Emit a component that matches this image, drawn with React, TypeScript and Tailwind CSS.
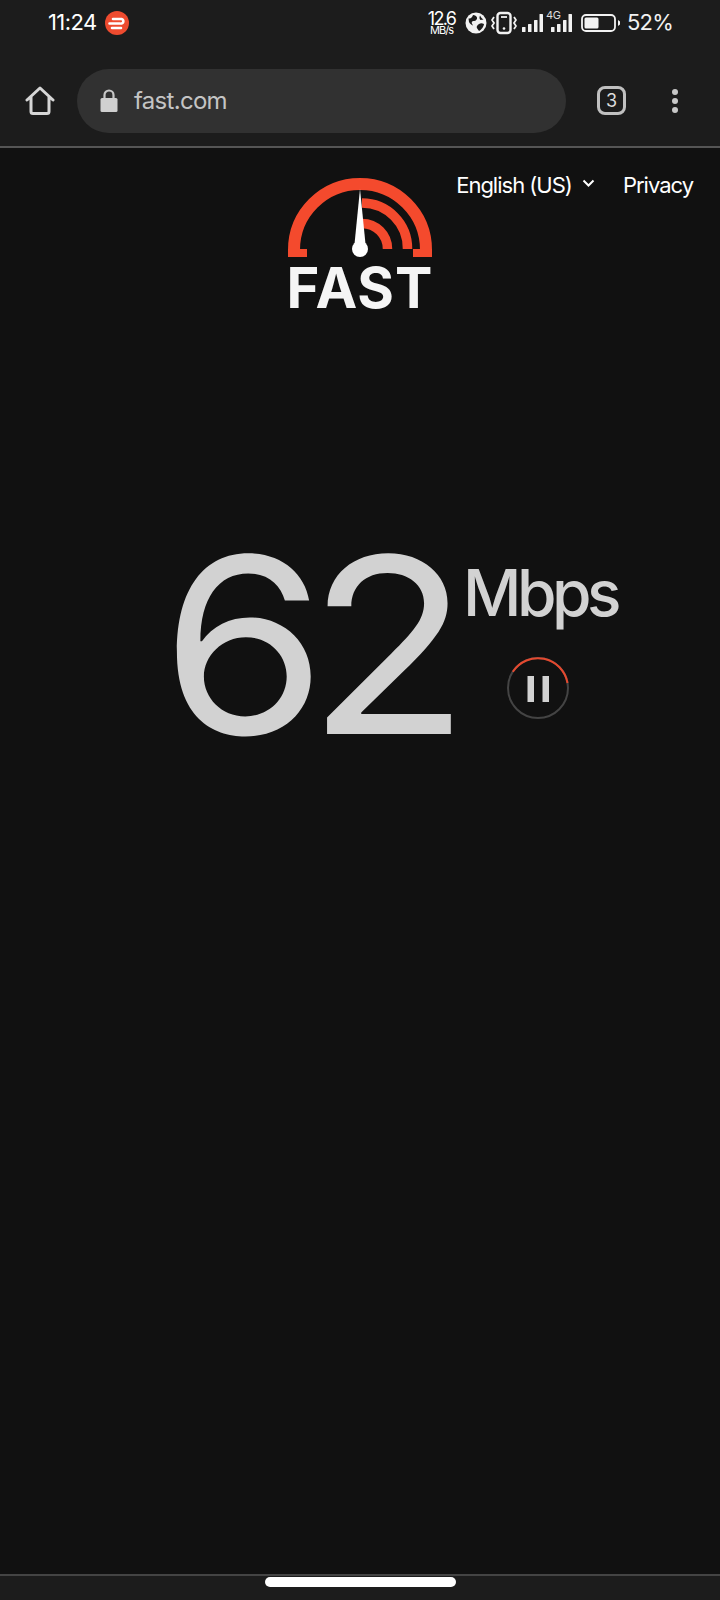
function Signal() {
  return (
    <svg width="21" height="18" viewBox="0 0 21 18" fill="#f2f2f2">
      <rect x="0" y="13" width="3.500" height="5" rx="0.500" />
      <rect x="6" y="10" width="3.500" height="8" rx="0.500" />
      <rect x="12" y="6" width="3.500" height="12" rx="0.500" />
      <rect x="17.500" y="0" width="3.500" height="18" rx="0.500" />
    </svg>
  );
}

export default function App() {
  return (
    <div className="flex h-[1600px] w-[720px] flex-col overflow-hidden bg-[#111111] font-['Inter',sans-serif] text-white">
      <header className="h-[148px] shrink-0 border-b-2 border-[#555555] bg-[#1c1c1c]">
        <div className="flex h-[45px] items-center pl-[48px] pr-[47px]">
          <span className="w-[57px] text-[22px] tracking-[-0.600px]">11:24</span>
          <svg width="24" height="24" viewBox="0 0 24 24">
            <circle cx="12" cy="12" r="12" fill="#ee4b2f" />
            <path d="M8 8h8.500a2.300 2.300 0 0 1 0 4.500M4.500 12.500h10.500M7 17h9" stroke="#fff" strokeWidth="2.600" strokeLinecap="round" fill="none" />
          </svg>
          <div className="ml-auto flex items-center">
            <div className="flex w-[29px] flex-col items-center">
              <span className="text-[18px] leading-[15px] tracking-[-1.700px]">12.6</span>
              <span className="text-[11px] leading-[9px] tracking-[-1px]">MB/s</span>
            </div>
            <svg className="ml-[9px]" width="22" height="22" viewBox="0 0 22 22">
              <circle cx="11" cy="11" r="10.500" fill="#f2f2f2" />
              <path d="M3.500 6.500c2.500.5 3.500-1 4.500-3.500 2 0 3.500 1 4 2.500s-1 3.500-3 3.500-3 1-1.500 3.500-2.500-.5-3.500-2.500zM12 14c2-2.500 4-3.500 7-2 0 2-2.500 6-5 7-1-2-3-3-2-5zM15 3.500c1 2 2 3 3.500 4l-3 .5c-1-1-1.500-2.500-.5-4.500z" fill="#1c1c1c" />
            </svg>
            <svg className="ml-[4px]" width="26" height="24" viewBox="0 0 26 24" fill="none" stroke="#f2f2f2">
              <rect x="6.500" y="2" width="13" height="20" rx="3" strokeWidth="2.400" />
              <path d="M10 6h6" strokeWidth="1.800" />
              <circle cx="13" cy="17.500" r="1.300" fill="#f2f2f2" stroke="none" />
              <path d="M3 6 1 9l2 3-2 3 2 3M23 6l2 3-2 3 2 3-2 3" strokeWidth="1.800" />
            </svg>
            <div className="ml-[5px] mt-[1px]">
              <Signal />
            </div>
            <div className="relative ml-[8px] mt-[1px]">
              <Signal />
              <span className="absolute left-[-5px] top-[-4px] text-[11px] leading-[11px] tracking-[-0.300px] text-[#dddddd]">4G</span>
            </div>
            <svg className="ml-[9px]" width="40" height="20" viewBox="0 0 40 20">
              <rect x="1" y="2" width="33" height="16" rx="4" fill="none" stroke="#f2f2f2" strokeWidth="1.800" />
              <rect x="3.500" y="4.500" width="14" height="11" rx="1.500" fill="#f2f2f2" />
              <path d="M37 7l2 1.500v3L37 13z" fill="#f2f2f2" />
            </svg>
            <span className="ml-[6px] text-[22px] tracking-[-0.800px] text-[#f2f2f2]">52%</span>
          </div>
        </div>
        <div className="flex h-[101px] items-center pt-[10px]">
          <svg className="ml-[25px]" width="30" height="30" viewBox="0 0 30 30" fill="none">
            <path d="M2 14 15 2l13 12M6 11v14.500a2 2 0 0 0 2 2h14a2 2 0 0 0 2-2V11" stroke="#d6d6d6" strokeWidth="3" strokeLinejoin="round" strokeLinecap="round" />
          </svg>
          <div className="ml-[22px] flex h-[64px] w-[489px] items-center rounded-full bg-[#313131] pl-[23px]">
            <svg width="18" height="24" viewBox="0 0 18 24">
              <path d="M4.500 10V6a4.500 4.500 0 0 1 9 0v4" fill="none" stroke="#c8c8c8" strokeWidth="2.200" />
              <rect x="0.500" y="9" width="17" height="14" rx="1.500" fill="#d0d0d0" />
            </svg>
            <span className="ml-[16px] text-[24px] tracking-[-0.700px] text-[#c4c4c4]">fast.com</span>
          </div>
          <div className="ml-[31px] flex h-[29px] w-[29px] items-center justify-center rounded-[8px] border-[3px] border-[#c0c0c0] text-[18px] text-[#dddddd]">3</div>
          <div className="ml-[46px] flex flex-col gap-[3px]">
            <span className="h-[6px] w-[6px] rounded-full bg-[#c8c8c8]" />
            <span className="h-[6px] w-[6px] rounded-full bg-[#c8c8c8]" />
            <span className="h-[6px] w-[6px] rounded-full bg-[#c8c8c8]" />
          </div>
        </div>
      </header>

      <main className="relative flex-1">
        <nav className="absolute right-[27px] top-[23px] flex items-center text-[22px] leading-[28px] tracking-[-1px] text-white">
          <span>English (US)</span>
          <svg className="mb-[4px] ml-[10px]" width="13" height="9" viewBox="0 0 13 9" fill="none">
            <path d="M1.500 1.500 6.500 6.500l5-5" stroke="#fff" strokeWidth="2" />
          </svg>
          <span className="ml-[28px]">Privacy</span>
        </nav>
        <div className="flex justify-center pt-[30px]">
          <div className="flex w-[144px] flex-col items-center">
            <svg width="144" height="80" viewBox="0 0 144 80">
              <path d="M6 79V72a66 66 0 0 1 132 0v7" fill="none" stroke="#f44a2d" strokeWidth="12" />
              <rect x="0" y="71" width="19" height="8" fill="#f44a2d" />
              <rect x="125" y="71" width="19" height="8" fill="#f44a2d" />
              <path d="M74 25a45.500 45.500 0 0 1 45.500 46" fill="none" stroke="#f44a2d" strokeWidth="9.500" />
              <path d="M74 45.500a25.500 25.500 0 0 1 25.500 25.500" fill="none" stroke="#f44a2d" strokeWidth="9.500" />
              <path d="M72 11 77.500 66h-11z" fill="#fff" />
              <circle cx="72" cy="71" r="8" fill="#fff" />
            </svg>
            <span className="mt-[2px] text-[56px] font-bold leading-[56px] tracking-[1px] text-[#f5f5f5]">FAST</span>
          </div>
        </div>
        <div className="ml-[161px] mt-[198px] flex items-start text-[#d2d2d2]">
          <span className="w-[289px] origin-left scale-x-[1.09] text-[245px] leading-[262px] tracking-[-18px]">62</span>
          <div className="ml-[13px] flex w-[170px] flex-col items-start">
            <span className="mt-[45px] text-[64px] font-medium leading-[68px] tracking-[-4.500px]">Mbps</span>
            <svg className="ml-[43px] mt-[29px]" width="64" height="64" viewBox="0 0 64 64" fill="none">
              <circle cx="32" cy="32" r="30" stroke="#444444" strokeWidth="2" />
              <path d="M6.800 15.800A30 30 0 0 1 61.500 27" stroke="#e5492f" strokeWidth="2" />
              <rect x="21.500" y="20" width="6.500" height="26" fill="#d2d2d2" />
              <rect x="36.500" y="20" width="6.500" height="26" fill="#d2d2d2" />
            </svg>
          </div>
        </div>
      </main>

      <footer className="flex h-[26px] shrink-0 justify-center border-t-2 border-[#444444] bg-[#1c1c1c] pt-[1px]">
        <div className="h-[10px] w-[191px] rounded-full bg-white" />
      </footer>
    </div>
  );
}
